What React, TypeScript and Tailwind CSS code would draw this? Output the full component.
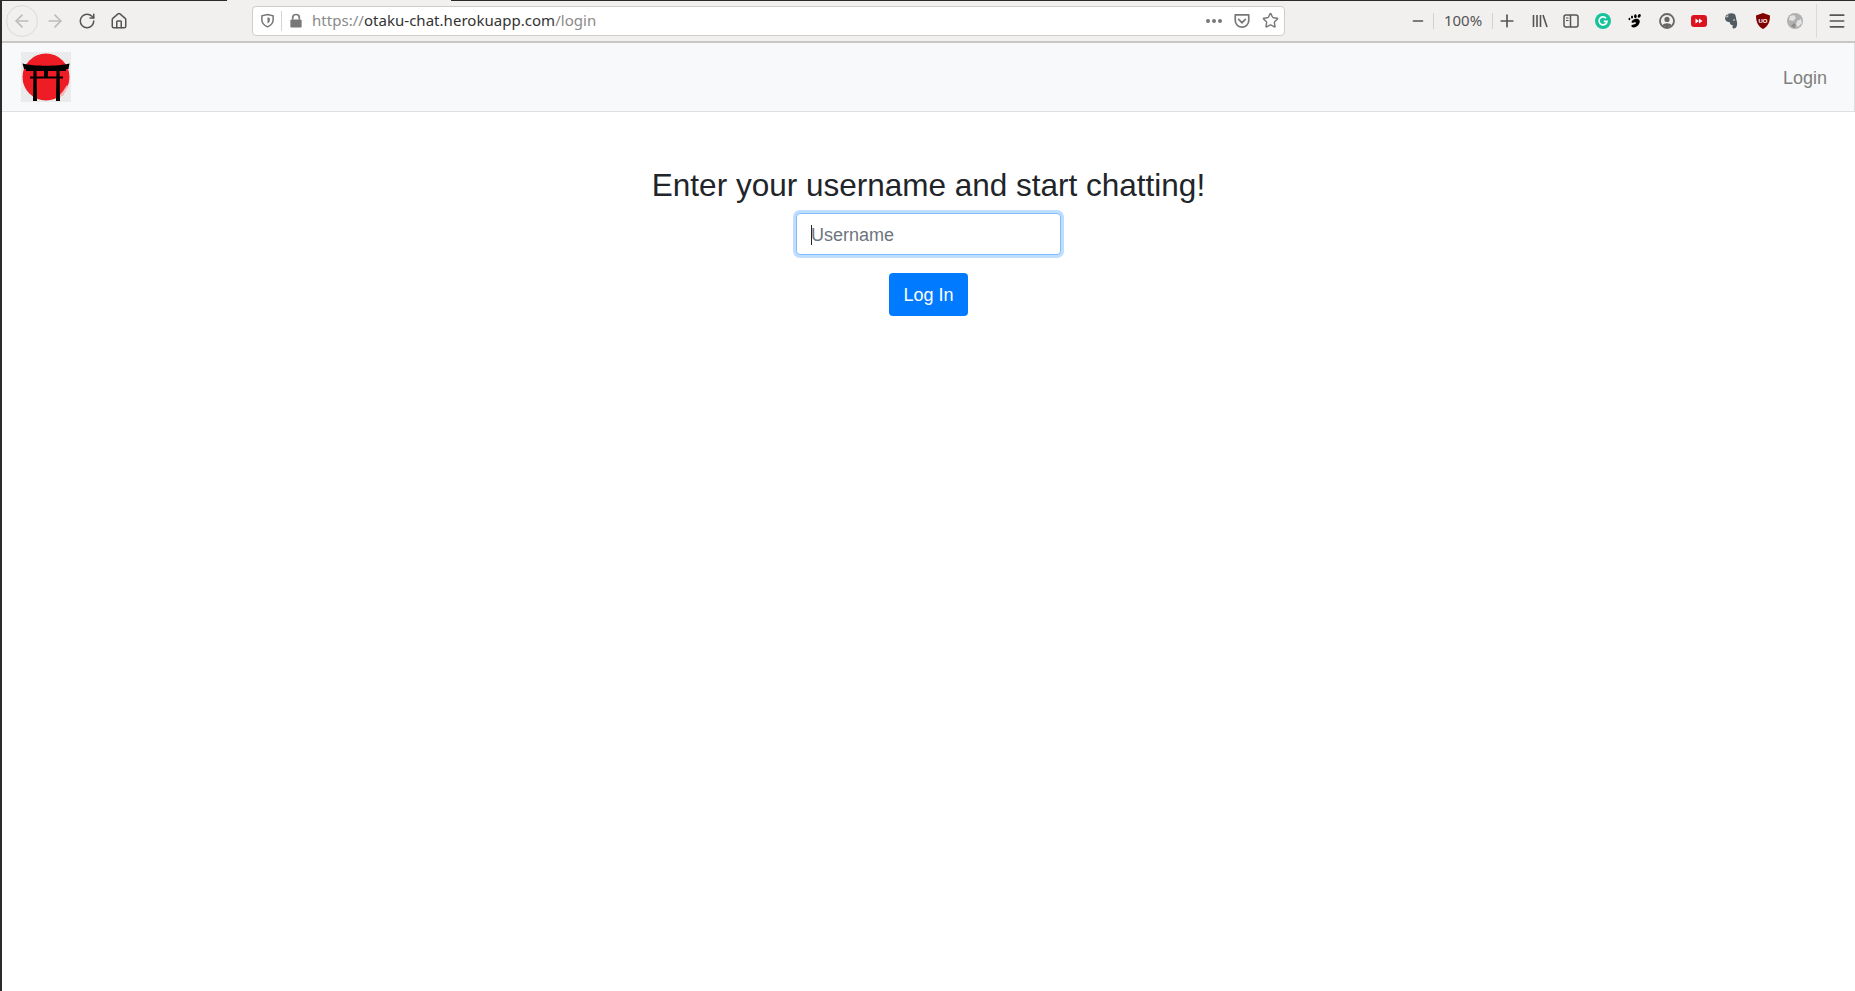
import React from 'react';
import {
  ArrowLeft,
  ArrowRight,
  RotateCw,
  House,
  Star,
  Minus,
  Plus,
  Menu,
} from 'lucide-react';

const Shield = ({ className }: { className?: string }) => (
  <svg viewBox="0 0 16 16" className={className} fill="none" stroke="currentColor">
    <path d="M8 1.5 L14 3 V7.5 C14 11 11 13.5 8 14.8 C5 13.5 2 11 2 7.5 V3 Z" strokeWidth="1.6" />
    <path d="M8 4.5 L10.5 5.2 V8 C10.5 9.5 9.3 10.6 8 11.3 Z" fill="currentColor" stroke="none" />
  </svg>
);

const Padlock = ({ className }: { className?: string }) => (
  <svg viewBox="0 0 14 16" className={className} fill="currentColor">
    <path d="M3.5 7 V4.5 C3.5 0.6 10.5 0.6 10.5 4.5 V7" fill="none" stroke="currentColor" strokeWidth="1.8" />
    <rect x="1" y="7" width="12" height="8.5" rx="1" />
  </svg>
);

const Pocket = ({ className }: { className?: string }) => (
  <svg viewBox="0 0 16 16" className={className} fill="none" stroke="currentColor" strokeWidth="1.5">
    <path d="M2 2.5 H14 V7.5 C14 11 11 13.5 8 13.5 C5 13.5 2 11 2 7.5 Z" strokeLinejoin="round" />
    <path d="M5 6.5 L8 9.5 L11 6.5" strokeLinecap="round" />
  </svg>
);

const Library = ({ className }: { className?: string }) => (
  <svg viewBox="0 0 16 16" className={className} fill="none" stroke="currentColor" strokeWidth="1.6">
    <path d="M1.5 2 V14 M5 2 V14 M8.5 2 V14 M11 2 L15 14" />
  </svg>
);

const Sidebar = ({ className }: { className?: string }) => (
  <svg viewBox="0 0 16 16" className={className} fill="none" stroke="currentColor" strokeWidth="1.5">
    <rect x="1" y="2" width="14" height="12" rx="2" />
    <path d="M7.5 2 V14" />
    <path d="M3 5 H5.5 M3 7.5 H5.5" strokeWidth="1.2" />
  </svg>
);

const Grammarly = () => (
  <svg viewBox="0 0 16 16" className="w-4 h-4">
    <circle cx="8" cy="8" r="8" fill="#15c39a" />
    <path d="M11 5.2 A4 4 0 1 0 12 8.3 H8.8" fill="none" stroke="#fff" strokeWidth="1.7" />
  </svg>
);

const Gnome = () => (
  <svg viewBox="0 0 16 16" className="w-4 h-4" fill="#000">
    <path d="M12.5 1 C14.5 1 14 4.5 11.8 4.7 C10 4.8 10.6 1.2 12.5 1 Z" />
    <ellipse cx="8.4" cy="3.2" rx="1.3" ry="2" />
    <ellipse cx="5" cy="4" rx="1" ry="1.6" />
    <ellipse cx="2.4" cy="6" rx="0.9" ry="1.3" />
    <path d="M8 6 C12 5 14 8 12 11 C10.5 14 6 15.5 4.5 13.5 C3.5 12 6.5 11.5 8 11 C10 10.3 9 8.5 7 9.5 C4 11 3.2 7.5 8 6 Z" />
  </svg>
);

const Account = () => (
  <svg viewBox="0 0 16 16" className="w-4 h-4 text-[#666]">
    <circle cx="8" cy="8" r="7" fill="none" stroke="currentColor" strokeWidth="1.8" />
    <circle cx="8" cy="6.4" r="2.6" fill="currentColor" />
    <path d="M3.4 12.4 C4.5 9.6 11.5 9.6 12.6 12.4 L8 14.5 Z" fill="currentColor" />
  </svg>
);

const YouTubeSkip = () => (
  <svg viewBox="0 0 16 12" className="w-4 h-3">
    <rect width="16" height="12" rx="3" fill="#dc1420" />
    <path d="M4.5 3.5 L8 6 L4.5 8.5 Z M8 3.5 L11.5 6 L8 8.5 Z" fill="#fff" />
  </svg>
);

const Evernote = () => (
  <svg viewBox="0 0 16 16" className="w-4 h-4" fill="#505b62">
    <path d="M2 3.5 L4.6 1 V3.5 Z" />
    <path d="M5.2 0.8 C7 0 10 0 11.5 1 C13 2 13 6 14 9 C14.5 12 13.5 15.5 11 15.5 C9 15.5 9 13 10.5 12.5 C8 12.5 7 11 6.5 9 C4 9 2 8 2 4.2 H5.2 Z" />
    <circle cx="11" cy="7" r="0.8" fill="#f2f0ee" />
  </svg>
);

const UBlock = () => (
  <svg viewBox="0 0 16 16" className="w-4 h-4">
    <path d="M8 0 L15 2.5 C15 9 13 13.5 8 16 C3 13.5 1 9 1 2.5 Z" fill="#800000" />
    <text x="8" y="9.5" textAnchor="middle" fontSize="6" fontWeight="700" fill="#fff" fontFamily="Liberation Sans">UO</text>
  </svg>
);

const Globe = () => (
  <svg viewBox="0 0 16 16" className="w-4 h-4">
    <circle cx="8" cy="8" r="8" fill="#b0b0b0" />
    <path d="M3 3 L7 2 L9 5 L6 8 L2 7 Z M10 8 L14 6 L15 10 L11 14 L9 12 Z" fill="#e2e2e2" />
    <path d="M7 10 L9 12 L7 15 L4 13 Z" fill="#8a8a8a" />
  </svg>
);

const Logo = () => (
  <svg viewBox="0 0 50 50" className="w-[50px] h-[50px]">
    <defs>
      <pattern id="checker" width="3" height="3" patternUnits="userSpaceOnUse">
        <rect width="3" height="3" fill="#f4f4f4" />
        <rect width="1.5" height="1.5" fill="#e2e2e2" />
        <rect x="1.5" y="1.5" width="1.5" height="1.5" fill="#e2e2e2" />
      </pattern>
    </defs>
    <rect width="50" height="50" fill="url(#checker)" />
    <circle cx="25" cy="25" r="23.5" fill="#ee1c25" />
    <path d="M39 44 L46 33 L47 35 L42 44 Z M36 46 L44 37 L44 39 L39 46 Z" fill="#f6b8bb" />
    {/* torii gate */}
    <path d="M1.5 11.5 C12 14.5 38 14.5 48.5 11.5 L47.5 17 H3 Z" fill="#000" />
    <path d="M5 17 H45 V19 H5 Z M23 18 H27 V25 H23 Z M9 24.5 H42 V26.5 H9 Z" fill="#000" />
    <path d="M12.5 17 H15.5 L16 49 H12 Z M35.5 17 H38.5 L39 49 H35 Z" fill="#000" />
  </svg>
);

export default function App() {
  return (
    <div className="min-h-[991px] bg-white border-l-2 border-[#2b2b2b] font-['Liberation_Sans',sans-serif] text-[#212529] flex flex-col">
      {/* Browser chrome */}
      <div className="h-[43px] bg-[#f2f0ee] border-b-2 border-[#c9c7c5] flex items-center relative">
        <div className="absolute top-0 -left-0.5 w-[227px] h-px bg-[#2b2b2b]" />
        <div className="absolute top-0 left-[449px] right-0 h-px bg-[#2b2b2b]" />
        <div className="w-[32px] h-[32px] ml-[4px] rounded-full border border-[#dcdad8] flex items-center justify-center text-[#bcbcbc]">
          <ArrowLeft size={20} />
        </div>
        <ArrowRight size={20} className="ml-[7px] text-[#bcbcbc]" />
        <RotateCw size={18} className="ml-[13px] text-[#555]" />
        <House size={18} className="ml-[14px] text-[#555]" />

        <div className="ml-[124px] w-[1033px] h-[30px] bg-white border border-[#cfcdcb] rounded flex items-center text-[#777] shrink-0">
          <div className="w-[29px] h-[20px] border-r border-[#d4d4d4] flex items-center justify-center">
            <Shield className="w-[15px] h-[15px]" />
          </div>
          <Padlock className="ml-[7px] w-[14px] h-[15px]" />
          <div className="ml-[9px] text-[15px] tracking-[0.03px] font-['Noto_Sans',sans-serif] text-[#8a8a8a]">
            https://<span className="text-[#333]">otaku-chat.herokuapp.com</span>/login
          </div>
          <div className="ml-auto flex items-center gap-[11px] pr-[5px]">
            <div className="flex gap-[2px]">
              <span className="w-[4px] h-[4px] rounded-full bg-[#777]" />
              <span className="w-[4px] h-[4px] rounded-full bg-[#777]" />
              <span className="w-[4px] h-[4px] rounded-full bg-[#777]" />
            </div>
            <Pocket className="w-[18px] h-[18px]" />
            <Star size={17} strokeWidth={2} />
          </div>
        </div>

        <div className="ml-auto flex items-center text-[#555]">
          <Minus size={16} className="text-[#555]" />
          <div className="w-px h-4 bg-[#d4d2d0] ml-[7px]" />
          <span className="w-[58px] text-center text-[15px] font-['Noto_Sans',sans-serif]">100%</span>
          <div className="w-px h-4 bg-[#d4d2d0]" />
          <Plus size={20} className="ml-[4px] text-[#555]" />
          <Library className="w-4 h-4 ml-[15px]" />
          <Sidebar className="w-4 h-4 ml-[15px]" />
          <div className="ml-[16px]"><Grammarly /></div>
          <div className="ml-[16px]"><Gnome /></div>
          <div className="ml-[16px]"><Account /></div>
          <div className="ml-[16px]"><YouTubeSkip /></div>
          <div className="ml-[16px]"><Evernote /></div>
          <div className="ml-[16px]"><UBlock /></div>
          <div className="ml-[16px]"><Globe /></div>
          <div className="w-px h-[34px] bg-[#dcdad8] ml-[13px]" />
          <Menu size={20} className="ml-[10px] mr-[8px]" />
        </div>
      </div>

      {/* Navbar */}
      <nav className="h-[69px] bg-[#f8f9fa] border-b border-r border-[#dfdfdf] flex items-center justify-between pl-[19px] pr-[27px]">
        <Logo />
        <a className="text-lg text-[#7f7f7f] mt-0.5">Login</a>
      </nav>

      {/* Login form */}
      <main className="flex flex-col items-center pt-[54px]">
        <h2 className="text-[31.5px] leading-[38px] mb-[9px]">Enter your username and start chatting!</h2>
        <div className="w-[265px] h-[42px] bg-white border border-[#80bdff] rounded shadow-[0_0_0_3px_rgba(0,123,255,0.25)] flex items-center pl-[14px] pt-px text-[#6c757d] text-lg">
          <span className="w-px h-5 bg-[#212529] -mr-px" />
          Username
        </div>
        <button className="mt-[18px] h-[43px] w-[79px] bg-[#007bff] text-white text-lg rounded">Log In</button>
      </main>
    </div>
  );
}
